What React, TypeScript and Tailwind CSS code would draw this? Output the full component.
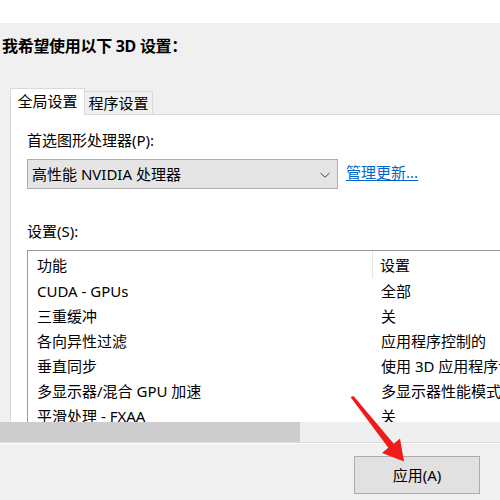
import React from "react";

const rows: [string, string][] = [
  ["CUDA - GPUs", "全部"],
  ["三重缓冲", "关"],
  ["各向异性过滤", "应用程序控制的"],
  ["垂直同步", "使用 3D 应用程序设置"],
  ["多显示器/混合 GPU 加速", "多显示器性能模式"],
  ["平滑处理 - FXAA", "关"],
  ["平滑处理 - 模式", "应用程序控制的"],
];

export default function App() {
  return (
    <div
      className="relative w-[500px] h-[500px] overflow-hidden bg-[#f0f0f0] text-[#000] flex flex-col"
      style={{ fontFamily: '"Noto Sans", "Noto Sans CJK SC", sans-serif' }}
    >
      <div className="h-[23px] bg-white shrink-0" />
      <div className="pl-[2px] pt-[12px] h-[65px] shrink-0">
        <div className="text-[16px] leading-[22px] font-bold whitespace-nowrap tracking-[-0.3px]">
          我希望使用以下 3D 设置：
        </div>
      </div>
      {/* tabs */}
      <div className="flex items-end pl-[10px] h-[26px] shrink-0">
        <div className="relative z-10 -mb-px h-[27px] w-[75px] bg-white border border-b-0 border-[#d9d9d9] flex items-center justify-center text-[15px] leading-[20px] pb-[2px]">
          全局设置
        </div>
        <div className="h-[23px] w-[68px] bg-[#f0f0f0] border border-l-0 border-b-0 border-[#d9d9d9] flex items-center justify-center text-[15px] leading-[20px]">
          程序设置
        </div>
      </div>
      {/* panel */}
      <div className="ml-[10px] h-[308px] shrink-0 bg-white border-t border-l border-[#d9d9d9] overflow-hidden pl-[16px] pt-[15px]">
        <div className="text-[15px] leading-[20px] whitespace-nowrap">首选图形处理器(P):</div>
        <div className="mt-[9px] flex items-center">
          <div className="w-[311px] h-[30px] bg-[#e5e5e5] border border-[#adadad] flex items-center justify-between pl-[4px] pr-[6px]">
            <span className="text-[15px] leading-[20px] whitespace-nowrap">高性能 NVIDIA 处理器</span>
            <svg width="12" height="8" viewBox="0 0 12 8" className="mt-[1px]">
              <path d="M1.5 2 L6 6.2 L10.5 2" fill="none" stroke="#444" strokeWidth="1" />
            </svg>
          </div>
          <span className="ml-[8px] text-[15px] leading-[20px] text-[#0066cc] underline underline-offset-2 whitespace-nowrap -mt-[5px]">
            管理更新...
          </span>
        </div>
        <div className="mt-[32px] text-[15px] leading-[20px] whitespace-nowrap">设置(S):</div>
        <div className="mt-[9px] w-[600px] border border-[#9a9a9a] bg-white">
          <div className="flex h-[27px] items-center text-[15px] leading-[20px]">
            <div className="w-[345px] pl-[9px] h-full flex items-center border-r border-[#e5e5e5]">功能</div>
            <div className="pl-[7px] whitespace-nowrap">设置</div>
          </div>
          {rows.map(([a, b]) => (
            <div key={a} className="flex h-[25px] items-center text-[15px] leading-[20px]">
              <div className="w-[346px] pl-[9px] whitespace-nowrap">{a}</div>
              <div className="pl-[7px] whitespace-nowrap">{b}</div>
            </div>
          ))}
        </div>
      </div>
      {/* scrollbar */}
      <div className="h-[20px] shrink-0 flex bg-[#efefef]">
        <div className="w-[300px] h-full bg-[#cdcdcd]" />
      </div>
      <div className="h-px bg-[#dadada] shrink-0" />
      <div className="h-px bg-white shrink-0" />
      <div className="flex-1 flex justify-end pr-[20px] pt-[12px]">
        <div className="w-[126px] h-[38px] bg-[#e1e1e1] border border-[#adadad] flex items-center justify-center text-[15px] leading-[20px] pb-[1px]">
          应用(A)
        </div>
      </div>
      {/* red arrow annotation */}
      <svg className="absolute left-0 top-0 pointer-events-none" width="500" height="500" viewBox="0 0 500 500">
        <polygon
          points="350.5,397 353.5,396 393.8,443.8 400,438.5 404,461.5 382,453 388.3,447.8"
          fill="#ef1b1b"
        />
      </svg>
    </div>
  );
}
